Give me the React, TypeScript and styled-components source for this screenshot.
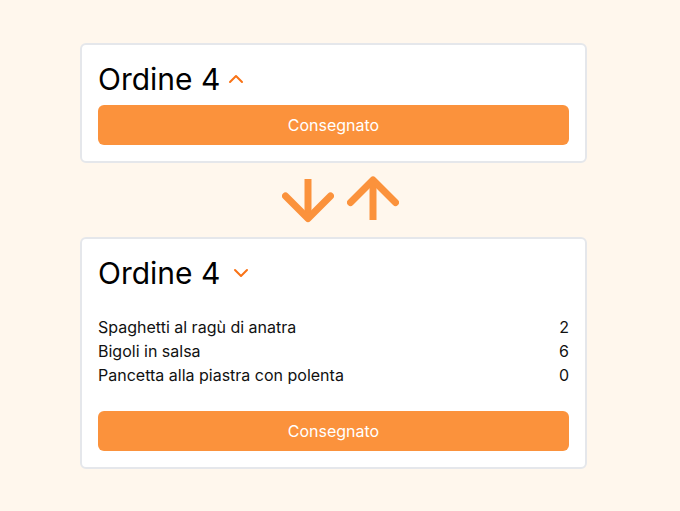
import React, { useState } from 'react';
import styled, { createGlobalStyle } from 'styled-components';
import { ChevronUp, ChevronDown } from 'lucide-react';

const GlobalStyle = createGlobalStyle`
  html, body {
    margin: 0;
    padding: 0;
    background: #fff7ed;
    font-family: Inter, "Noto Sans", sans-serif;
  }
`;

const Page = styled.div`
  min-height: 100vh;
  display: flex;
  align-items: center;
  justify-content: center;
`;

const Column = styled.div`
  width: 520px;
  display: flex;
  flex-direction: column;
`;

const Card = styled.div`
  width: 507px;
  box-sizing: border-box;
  background: #fff;
  border: 2px solid #e5e7eb;
  border-radius: 6px;
  padding: 16px;
  display: flex;
  flex-direction: column;
`;

const Header = styled.div`
  display: flex;
  align-items: center;
  height: 36px;
`;

const Title = styled.h2`
  margin: 0;
  font-size: 30px;
  line-height: 36px;
  font-weight: 400;
  color: #000;
`;

const Toggle = styled.button<{ $shift: number }>`
  border: none;
  background: none;
  padding: 0;
  margin-left: ${(p) => p.$shift}px;
  display: flex;
  color: #f97316;
  cursor: pointer;
`;

const Items = styled.ul`
  list-style: none;
  margin: 24px 0 0;
  padding: 0;
`;

const Item = styled.li`
  display: flex;
  justify-content: space-between;
  font-size: 16px;
  line-height: 24px;
  color: #111;
`;

const Button = styled.button<{ $gap: number }>`
  margin-top: ${(p) => p.$gap}px;
  height: 40px;
  border: none;
  border-radius: 6px;
  background: #fb923c;
  color: #fff;
  font-family: inherit;
  font-size: 16px;
  cursor: pointer;
`;

const ArrowRow = styled.div`
  display: flex;
  justify-content: center;
  gap: 13px;
  padding: 12px 0 14px;
`;

const Arrow = styled.svg`
  width: 52px;
  height: 48px;
  stroke: #fb923c;
  stroke-width: 7;
  fill: none;
  stroke-linejoin: round;
`;

const items = [
  { name: 'Spaghetti al ragù di anatra', qty: 2 },
  { name: 'Bigoli in salsa', qty: 6 },
  { name: 'Pancetta alla piastra con polenta', qty: 0 },
];

function OrderCard({ open, shift }: { open: boolean; shift: number }) {
  return (
    <Card>
      <Header>
        <Title>Ordine 4</Title>
        <Toggle $shift={shift} aria-label="toggle">
          {open ? <ChevronDown size={24} /> : <ChevronUp size={24} />}
        </Toggle>
      </Header>
      {open && (
        <Items>
          {items.map((it) => (
            <Item key={it.name}>
              <span>{it.name}</span>
              <span>{it.qty}</span>
            </Item>
          ))}
        </Items>
      )}
      <Button $gap={open ? 24 : 8}>Consegnato</Button>
    </Card>
  );
}

export default function App() {
  const [open] = useState(true);
  return (
    <Page>
      <GlobalStyle />
      <Column>
        <OrderCard open={false} shift={4} />
        <ArrowRow>
          <Arrow viewBox="0 0 52 48">
            <path d="M26 4V43" />
            <path d="M3.5 21L26 43.5L48.5 21" strokeLinecap="round" />
          </Arrow>
          <Arrow viewBox="0 0 52 48">
            <path d="M26 45V5" />
            <path d="M3.5 27.5L26 5L48.5 27.5" strokeLinecap="round" />
          </Arrow>
        </ArrowRow>
        <OrderCard open={open} shift={9} />
      </Column>
    </Page>
  );
}
